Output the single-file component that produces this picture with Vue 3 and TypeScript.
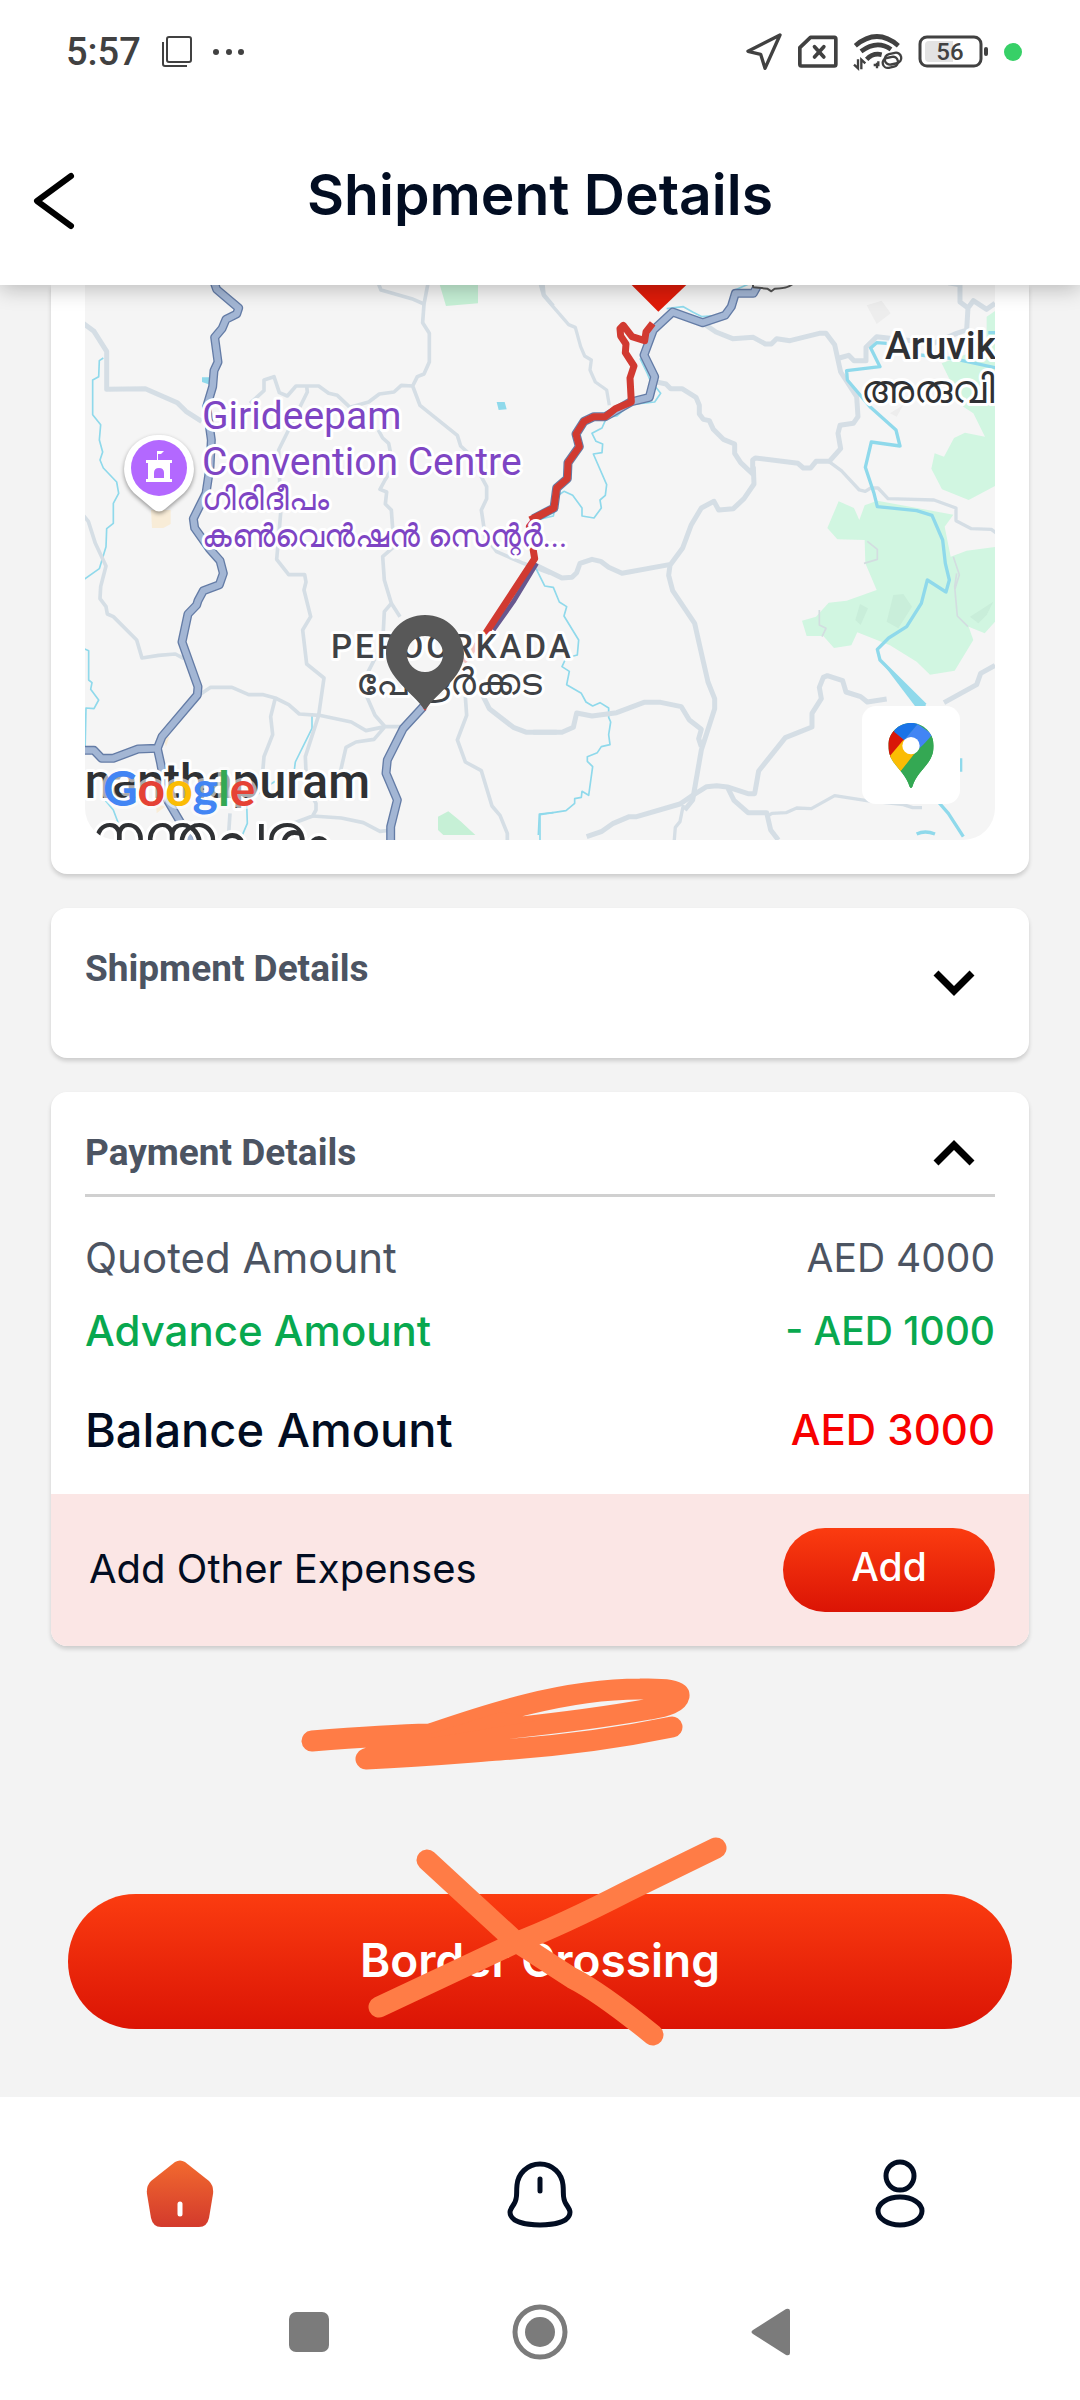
<script setup lang="ts">
interface AmountRow {
  label: string
  value: string
  tone: 'quoted' | 'advance' | 'balance'
}

const amounts: AmountRow[] = [
  { label: 'Quoted Amount', value: 'AED 4000', tone: 'quoted' },
  { label: 'Advance Amount', value: '- AED 1000', tone: 'advance' },
  { label: 'Balance Amount', value: 'AED 3000', tone: 'balance' },
]

// Map geometry is drawn in thirds of a pixel, grouped by map tile.
const highwaysWest: string[] = [
  'M490 0L500 28L566 84L560 102L528 118L516 146L494 172L504 246L492 272L488 320L470 380L484 480L480 560L468 640L430 716L434 744L478 806L510 842L520 880L508 914L460 932L444 962L440 975L414 1002L396 1086L444 1220L442 1245L336 1370L322 1405L264 1407L190 1435H155L132 1411H100',
  'M322 1405L332 1450L352 1560L405 1650L430 1700',
  'M1120 1280L1060 1345L1012 1440L1008 1480L1042 1560L1022 1640V1700',
]
const highwaysEast: string[] = [
  'M668 -10L640 40H586L574 80L555 106L488 128L398 96L340 150L312 225L344 290L328 352L272 366L196 410H162L132 424L108 462L118 500L84 548L82 596L50 624L42 684L-20 716',
]
const routeEast =
  'M338 130L318 156L314 182L276 170L250 136L240 146L242 168L258 192L256 218L282 258L270 294L274 366L226 386L196 410H162L132 424L108 462L118 500L84 548L82 596L50 624L42 684L-30 720'
const routeWest = 'M1500 690L1460 712L1438 740L1454 836L1306 1062'

const minorWest: string[] = [
  'M985 10L993 30L1085 56L1122 72L1134 10M1122 72L1118 128L1138 160V246L1122 282L1102 290L1088 318L1054 316L1032 336L988 342L956 366L900 382L862 346L836 340L806 318H738L712 348L688 338L672 290L642 300V332L600 370M770 318L772 336L686 510L692 700L680 838L716 884H764L768 906L762 930L782 1010L758 1050L770 1152L822 1194L806 1306L766 1430L770 1520L798 1570V1590L788 1608L690 1645M1088 318L1110 376L1222 466L1232 498L1256 520L1310 620V656L1294 690L1306 770L1340 815L1420 850L1500 880',
  'M985 450L998 474L1016 490L1030 560L1005 600L990 628L1010 636L1006 672L1024 690L1032 800L998 830L1003 900L1024 970L1050 1010M1024 970L1003 995L998 1090L952 1180L946 1240L975 1306L1005 1340',
  'M100 706L115 724L136 790L168 858L152 920L150 956L168 980L172 1002L190 1010L260 1080L276 1134L326 1126L376 1122L402 1136',
  'M452 1242L482 1222H546L596 1244H640L676 1254L716 1274L748 1302L808 1306L904 1326L948 1352L1005 1340H1050M676 1254L662 1310L668 1364L642 1430L636 1500M1005 1340L972 1378L918 1386L888 1402L870 1480M536 1660L540 1600',
  'M788 1608L874 1614L940 1628L990 1654L1025 1650M1246 1250L1250 1306L1222 1380L1246 1446L1294 1472L1326 1578L1350 1606L1372 1660V1700M1478 5L1482 44L1510 78',
]
const majorWest: string[] = [
  'M100 130L132 154L170 214V328L286 326L382 368L408 394L455 424',
  'M1295 1240L1318 1286L1390 1342L1430 1357H1520',
]
const minorEast: string[] = [
  'M0 10L10 46L86 134L106 142L122 200L134 228L154 240L150 270L166 306L200 330L208 376',
  'M866 544L904 572L958 630L976 634L992 624H1014L1044 656L1182 660L1248 684V722L1294 746L1354 748L1370 760',
  'M680 1610L696 1600L738 1598L770 1584L814 1586L884 1547L980 1562L1090 1574L1118 1583H1146M430 1575L420 1625L406 1642L402 1690',
]
const majorEast: string[] = [
  'M490 130L528 156L578 176L640 172L676 192H694L710 176L750 182L838 160H858L884 194L902 276L950 350L954 410L940 430L900 436L894 460L902 506L868 544H828L812 564H790L774 550L646 534L638 540V582L602 548L584 520V492L550 478L520 448L508 422L490 418L478 402V376L468 352L426 326H392L378 312L345 305M640 560L642 612L612 656L580 686L536 690L522 664L484 684L454 734L428 804L390 856L386 886L398 932L464 1030L482 1110L504 1206L524 1256V1286L484 1410L458 1560L434 1590',
  'M-20 852L66 894L96 892L110 878L120 850L156 838L182 844L206 862L246 880L388 854',
  'M898 234L926 226L942 242L978 242V202L1010 170L1180 190L1250 160L1280 150L1284 84L1260 66V14L1225 8M1284 84L1300 62L1340 88L1365 70',
  'M-20 1357H66L100 1342L110 1299L156 1308L230 1298L312 1267H362L424 1280L448 1320L484 1348L476 1376L484 1400',
  'M140 1670L186 1654L220 1630L268 1610H290L420 1572L458 1546L500 1520L530 1517L562 1521L624 1541H644L656 1473L736 1373L816 1341V1300L844 1256L838 1222L850 1192L862 1187L908 1202L918 1236L962 1250L982 1266L1040 1257M562 1521L582 1561L624 1598H680L692 1650L715 1680M1212 1268L1310 1214L1322 1180L1365 1156',
]
const streamsWest: string[] = [
  'M160 234L148 242L146 290L128 300V404L152 434L148 480L158 516L150 540L160 564L200 606L206 640L190 670V730L170 746L168 800L148 866L100 900',
  'M100 1105L116 1112V1200L126 1208L122 1228L146 1260L132 1286L108 1284L105 1420M165 1560L190 1590L205 1630M786 1300V1345L736 1446L733 1470L656 1516L590 1570L592 1630L575 1670M1465 1665L1468 1602L1510 1598',
]
const streamsEast: string[] = [
  'M642 5L585 30M550 105L486 110L458 96L430 80L380 86M300 235L322 280L330 300L362 340L344 366L270 374L230 408L200 412L186 444L156 460L168 484L188 492L186 518L160 522L200 614L196 646L180 660L184 684L162 714L126 708V684L98 646L72 634L52 648L40 708L-20 722',
  'M-20 840L-10 870L14 918L40 922L58 966L80 980L72 1008L116 1080L112 1125L78 1134L66 1160L88 1174L80 1214L124 1240L138 1266L158 1278L180 1268L206 1284V1312L212 1326L206 1364L210 1394L184 1400L172 1418L142 1430V1444L158 1460L146 1546L126 1534L124 1552L104 1556V1570L78 1592L0 1604V1690',
]
const rivers: string[] = [
  'M1040 190L1010 188L992 204L1020 260L920 272L922 300L990 380L1068 450L1080 498L994 486L976 562L1002 640L1012 680L1130 692L1176 706L1208 780L1216 850L1228 900L1218 936L1162 900L1144 970L1100 1040L1046 1074L1012 1108L1020 1140L1156 1275M1190 1560L1225 1600L1270 1670M1130 1662Q1155 1650 1185 1662M1262 1435V1475M1140 225L1240 236L1370 264M1345 158H1370',
]
const parks: string[] = [
  'M1370 90L1340 110V200L1205 250L1225 290L1270 380L1300 400L1335 470L1275 458L1242 474L1212 530L1184 520L1174 566L1206 628L1286 660L1370 615Z',
  'M1012 662L1240 704L1214 740L1232 830L1280 812L1370 800V1020L1334 1060L1286 1040L1300 1080L1244 1172L1170 1184L1130 1145L1050 1096L952 1057L934 1096L882 1104L850 1068H800L786 1022L828 1010L866 968L920 962L1010 930L976 850L974 780L892 778L862 744L896 664L942 684L958 720L974 676Z',
]
</script>

<template>
  <div class="screen">
    <div class="status">
      <div class="status-side">
        <span class="clock">5:57</span>
        <svg width="32" height="32" viewBox="0 0 32 32" fill="none" stroke="#414141" stroke-width="2">
          <rect x="6" y="1" width="24" height="25" rx="2" />
          <path d="M2 6V28Q2 30 4 30H26" />
        </svg>
        <svg width="32" height="32" viewBox="0 0 32 32" fill="#414141">
          <circle cx="3" cy="16" r="3" /><circle cx="16" cy="16" r="3" /><circle cx="28" cy="16" r="3" />
        </svg>
      </div>
      <div class="status-side status-right">
        <svg width="36" height="38" viewBox="599 102 108 114" fill="none" stroke="#414141" stroke-width="10" stroke-linejoin="round">
          <path d="M701 108L605 157L643 166L656 208Z" />
        </svg>
        <svg width="41" height="34" viewBox="744 109 122 102" fill="none" stroke="#414141" stroke-width="11" stroke-linejoin="round">
          <path d="M784 116H856Q860 116 860 121V197Q860 202 855 202H757Q752 202 752 197V147Z" />
          <path d="M796 144L824 175M824 144L796 175" stroke-linecap="round" />
        </svg>
        <svg width="50" height="38" viewBox="908 101 150 114" fill="none" stroke="#414141" stroke-width="14">
          <path d="M915 139Q980 84 1044 139M932 156Q980 120 1022 150M949 180Q968 160 994 166" />
          <g stroke-width="7">
            <path d="M923 180V207L911 196M933 210V181L945 192M970 197H984V186M980 190V207" />
            <rect x="1003" y="162" width="50" height="32" rx="16" transform="rotate(-12 1028 178)" />
            <rect x="997" y="174" width="46" height="30" rx="15" transform="rotate(-12 1020 189)" />
          </g>
        </svg>
        <svg width="71" height="34" viewBox="0 0 71 34">
          <rect x="2" y="2" width="61" height="29" rx="7" fill="none" stroke="#414141" stroke-width="3" />
          <path d="M11 6H35V27H11Q7 27 7 23V10Q7 6 11 6Z" fill="#e3e3e3" />
          <rect x="66" y="12" width="4" height="9" rx="2" fill="#414141" />
          <text x="32" y="25" text-anchor="middle" class="battery-text">56</text>
        </svg>
        <span class="live-dot"></span>
      </div>
    </div>

    <header class="header">
      <button class="back" type="button" aria-label="Back">
        <svg width="43" height="58" viewBox="0 0 43 58" fill="none" stroke="#000" stroke-width="6" stroke-linecap="round" stroke-linejoin="round">
          <path d="M38 4L4 29L38 54" />
        </svg>
      </button>
      <h1>Shipment Details</h1>
    </header>

    <main class="content">
      <section class="card map-card">
        <div class="map">
          <svg class="map-art" viewBox="0 0 910 555" preserveAspectRatio="xMidYMid slice" fill="none" stroke-linejoin="round">
            <g transform="scale(0.33333)">
              <g transform="translate(1365 -15)">
                <path v-for="d in parks" :key="d" :d="d" fill="#d1f6e1" />
                <path d="M1060 945L1090 942L1116 980L1075 1045L1040 1025ZM1290 1010L1360 965L1340 1005L1315 1030ZM960 972L984 985L962 1035L946 1020Z" fill="#c9eeda" />
                <path d="M980 76L1025 62L1052 100L1010 132ZM1050 400L1090 375L1070 410Z" fill="#ededed" />
                <path d="M982 784L1012 808V838L972 850M838 990V1035L858 1045L846 1070M1250 880L1244 920L1252 1008L1284 1040M1240 830L1258 884L1244 930" stroke="#d3dde0" stroke-width="5" />
              </g>
              <g transform="translate(-105 -15)">
                <path d="M1165 0H1284V70L1188 78ZM1164 1610L1195 1594L1230 1622L1276 1665H1180L1164 1650Z" fill="#c6f0d6" />
                <path d="M456 292H480V314L456 306ZM1340 366H1364L1370 388L1346 390Z" fill="#8fd9eb" />
                <path d="M303 690H362V732L340 744H306ZM340 1375L358 1370L348 1400ZM318 1570L345 1580L320 1600Z" fill="#f8ecd7" />
                <g stroke="#8fd9eb" stroke-width="5"><path v-for="d in streamsWest" :key="d" :d="d" /></g>
                <g stroke="#d5dee5" stroke-width="11"><path v-for="d in minorWest" :key="d" :d="d" /></g>
                <g stroke="#d5dee5" stroke-width="15"><path v-for="d in majorWest" :key="d" :d="d" /></g>
                <g stroke="#647ca6" stroke-width="27"><path v-for="d in highwaysWest" :key="d" :d="d" /></g>
                <g stroke="#a3b6d4" stroke-width="19"><path v-for="d in highwaysWest" :key="d" :d="d" /></g>
              </g>
              <g transform="translate(1365 -15)">
                <g stroke="#8fd9eb" stroke-width="5"><path v-for="d in streamsEast" :key="d" :d="d" /></g>
                <g stroke="#d5dee5" stroke-width="10"><path v-for="d in minorEast" :key="d" :d="d" /></g>
                <g stroke="#d5dee5" stroke-width="15"><path v-for="d in majorEast" :key="d" :d="d" /></g>
                <g stroke="#8fd9eb" stroke-width="10"><path v-for="d in rivers" :key="d" :d="d" /></g>
                <path d="M1020 1140L1130 1285H1165Z" fill="#8fd9eb" />
                <g stroke="#647ca6" stroke-width="27"><path v-for="d in highwaysEast" :key="d" :d="d" /></g>
                <g stroke="#a3b6d4" stroke-width="19"><path v-for="d in highwaysEast" :key="d" :d="d" /></g>
                <path d="M636 0L640 22L682 26L694 34L704 26Q745 26 760 10" stroke="#555" stroke-width="6" fill="#f5f5f5" />
                <path :d="routeEast" stroke="#d13a31" stroke-width="21" />
              </g>
              <g transform="translate(-105 -15)">
                <path d="M1460 850L1390 965L1330 1050" stroke="#67588f" stroke-width="14" />
                <path :d="routeWest" stroke="#d13a31" stroke-width="21" />
                <path d="M1306 1062L1240 1145" stroke="#f3c6c3" stroke-width="18" />
              </g>
              <path d="M1640 0H1804L1720 80Z" fill="#df1b09" />
            </g>

            <g class="place">
              <text x="117" y="144">Girideepam</text>
              <text x="117" y="190">Convention Centre</text>
              <text x="117" y="225" class="place-local">ഗിരിദീപം</text>
              <text x="117" y="262" class="place-local">കൺവെൻഷൻ സെന്റർ...</text>
            </g>
            <g class="town">
              <text x="800" y="74" class="town-name">Aruvik</text>
              <text x="776" y="118" class="town-local">അരുവി</text>
              <text x="285" y="513" text-anchor="end" class="city">nanthapuram</text>
              <text x="5" y="570" class="city-local">നന്തപുരം</text>
              <text x="246" y="373" class="district">PEROORKADA</text>
              <text x="271" y="410" class="district-local">പേരൂർക്കട</text>
            </g>

            <g>
              <path class="pin-shade" d="M74 150A34 34 0 0 1 99 208L80 224Q74 229 68 224L49 208A34 34 0 0 1 74 150Z" fill="#fff" />
              <circle cx="74" cy="183" r="28" fill="#b368ff" />
              <path d="M72 175V166H79L76 169H73V175ZM61 175H87V178H85V194H87V197H61V194H63V178H61Z" fill="#fff" />
              <path d="M69 193V188Q69 183 74 183Q79 183 79 188V193Z" fill="#b368ff" />
            </g>
            <path d="M340 426L332 413H348Z" fill="#d13a31" />
            <path d="M340 330C318 330 301 347 301 369C301 392 329 409 339 424H341C351 409 379 392 379 369C379 347 362 330 340 330ZM340 351A18 18 0 1 1 340 387A18 18 0 1 1 340 351Z" fill="#585858" fill-rule="evenodd" />
            <text x="18" y="521" class="google"><tspan fill="#4285f4">G</tspan><tspan fill="#e54235">o</tspan><tspan fill="#fbbc05">o</tspan><tspan fill="#4285f4">g</tspan><tspan fill="#34a853">l</tspan><tspan fill="#e54235">e</tspan></text>
          </svg>
          <button class="open-maps" type="button" aria-label="Open in Maps">
            <svg width="46" height="65" viewBox="1047 427 136 195">
              <defs>
                <clipPath id="pin-shape">
                  <path d="M1115 427C1153 427 1183 457 1183 495C1183 552 1135 565 1119 618Q1115 625 1111 618C1095 565 1047 552 1047 495C1047 457 1077 427 1115 427Z" />
                </clipPath>
              </defs>
              <g clip-path="url(#pin-shape)">
                <rect x="1040" y="420" width="150" height="210" fill="#34a853" />
                <path d="M1040 455L1065 450L1115 495L1050 535Z" fill="#d91608" />
                <path d="M1064 453L1080 420H1144L1095 479Z" fill="#1a73e8" />
                <path d="M1135 430L1183 464L1132 510L1094 479Z" fill="#4285f4" />
                <path d="M1092 478L1140 500L1070 590L1040 540Z" fill="#fbbc04" />
                <path d="M1183 457L1060 600L1120 640L1200 560Z" fill="#34a853" />
              </g>
              <circle cx="1115" cy="495" r="26" fill="#fff" />
            </svg>
          </button>
        </div>
      </section>

      <section class="card shipment-card">
        <button class="toggle" type="button" aria-expanded="false">
          <span>Shipment Details</span>
          <svg class="chevron-low" width="42" height="26" viewBox="0 0 42 26" fill="none" stroke="#000" stroke-width="7">
            <path d="M3 3L21 21L39 3" />
          </svg>
        </button>
      </section>

      <section class="card payment-card">
        <button class="toggle payment-toggle" type="button" aria-expanded="true">
          <span>Payment Details</span>
          <svg width="42" height="26" viewBox="0 0 42 26" fill="none" stroke="#000" stroke-width="7">
            <path d="M3 23L21 5L39 23" />
          </svg>
        </button>
        <dl class="amounts">
          <div v-for="row in amounts" :key="row.label" class="amount" :class="row.tone">
            <dt>{{ row.label }}</dt>
            <dd>{{ row.value }}</dd>
          </div>
        </dl>
        <div class="expenses">
          <span>Add Other Expenses</span>
          <button class="add" type="button">Add</button>
        </div>
      </section>

      <div class="actions">
        <button class="crossing" type="button">Border Crossing</button>
        <svg class="marks" width="480" height="451" viewBox="300 1647 480 451" fill="none" stroke="#ff7c46" stroke-width="21" stroke-linecap="round" stroke-linejoin="round">
          <path d="M312 1742C350 1739 390 1736 430 1735C480 1718 560 1690 640 1690Q680 1689 679 1697Q677 1706 650 1710C600 1719 520 1729 430 1737L366 1760C430 1757 470 1753 500 1751Q590 1745 672 1728" />
          <path d="M431 1735L500 1713L518 1716L535 1722L431 1739Z" fill="#ff7c46" stroke="none" />
          <path d="M716 1849L628 1892Q560 1927 515 1944L379 2008M427 1861L515 1942L572 1979Q600 1993 653 2036" />
        </svg>
      </div>
    </main>

    <nav class="tabs" aria-label="Main">
      <a href="#home" aria-label="Home">
        <svg width="68" height="68" viewBox="0 0 68 68">
          <defs>
            <linearGradient id="home-fill" x1="0" y1="0" x2="0" y2="1">
              <stop offset="0" stop-color="#f26a2f" /><stop offset="1" stop-color="#d33a2c" />
            </linearGradient>
          </defs>
          <path d="M29 2Q34 -1 39 2L63 21Q68 26 67 34L63 58Q61 67 53 67H15Q7 67 5 58L1 34Q0 26 5 21Z" fill="url(#home-fill)" />
          <path d="M34 44V54" stroke="#fff" stroke-width="5" stroke-linecap="round" />
        </svg>
      </a>
      <a href="#alerts" aria-label="Notifications">
        <svg width="68" height="68" viewBox="0 0 68 68" fill="none" stroke="#020d22" stroke-width="5">
          <path d="M34 4C47 4 56 14 57 25C58 34 56 38 60 44C64 50 65 52 63 56C60 62 48 65 34 65S8 62 5 56C3 52 4 50 8 44C12 38 10 34 11 25C12 14 21 4 34 4Z" />
          <path d="M34 19V31" stroke-linecap="round" />
        </svg>
      </a>
      <a href="#profile" aria-label="Profile">
        <svg width="68" height="70" viewBox="0 0 68 70" fill="none" stroke="#020d22" stroke-width="5">
          <circle cx="34" cy="17" r="14" />
          <ellipse cx="34" cy="52" rx="22" ry="14" />
        </svg>
      </a>
    </nav>

    <div class="system">
      <button type="button" aria-label="Recent apps">
        <svg width="42" height="42" viewBox="0 0 42 42"><rect x="1" y="1" width="40" height="40" rx="7" fill="#7b7b7b" /></svg>
      </button>
      <button type="button" aria-label="Home screen">
        <svg width="56" height="56" viewBox="0 0 56 56">
          <circle cx="28" cy="28" r="25" fill="none" stroke="#7b7b7b" stroke-width="5" /><circle cx="28" cy="28" r="15" fill="#7b7b7b" />
        </svg>
      </button>
      <button type="button" aria-label="Go back">
        <svg width="42" height="48" viewBox="0 0 42 48"><path d="M3 22L36 1Q40 0 40 3V45Q40 48 36 47L3 26Q0 24 3 22Z" fill="#7b7b7b" /></svg>
      </button>
    </div>
  </div>
</template>

<style>
body {
  background: #fff;
}
</style>

<style scoped>
* {
  box-sizing: border-box;
}
.screen {
  font-family: Inter, "Liberation Sans", sans-serif;
  color: #020d22;
  background: #fff;
}
svg {
  display: block;
}
button {
  border: 0;
  margin: 0;
  padding: 0;
  background: none;
  font: inherit;
  color: inherit;
}
.status {
  position: relative;
  z-index: 2;
  display: flex;
  align-items: center;
  justify-content: space-between;
  height: 104px;
  padding: 0 58px 0 66px;
  background: #fff;
}
.status-side {
  display: flex;
  align-items: center;
  gap: 20px;
}
.status-right {
  gap: 15px;
}
.clock {
  font: 500 38px/48px Roboto, sans-serif;
  color: #414141;
}
.battery-text {
  font: 500 24px Roboto, sans-serif;
  fill: #414141;
}
.live-dot {
  width: 18px;
  height: 18px;
  border-radius: 50%;
  background: #37d067;
}
.header {
  position: relative;
  z-index: 1;
  display: grid;
  grid-template-columns: 120px 1fr 120px;
  align-items: center;
  height: 181px;
  background: #fff;
  box-shadow: 0 4px 20px rgb(0 0 0 / 24%);
}
.back {
  padding: 12px 0 0 33px;
}
h1 {
  margin: 0;
  text-align: center;
  font-size: 57px;
  line-height: 72px;
  font-weight: 600;
}
.content {
  display: flex;
  flex-direction: column;
  gap: 34px;
  padding: 0 51px;
  background: #f3f3f3;
}
.card {
  background: #fff;
  border-radius: 16px;
  box-shadow: 0 3px 4px rgb(0 0 0 / 16%);
}
.map-card {
  padding: 0 34px 34px;
  border-radius: 0 0 16px 16px;
}
.map {
  position: relative;
  height: 555px;
  overflow: hidden;
  background: #f5f5f5;
  border-radius: 0 0 32px 32px;
}
.map-art {
  width: 100%;
  height: 100%;
}
.map-art text {
  paint-order: stroke;
  stroke: #fff;
  stroke-width: 6px;
  stroke-linejoin: round;
  font-family: Roboto, sans-serif;
}
.place {
  fill: #7e45c4;
  font-size: 39px;
}
.place .place-local {
  font-size: 31px;
}
.town {
  fill: #2f3134;
  font-weight: 500;
}
.town-name {
  font-size: 39px;
}
.town-local {
  font-size: 39px;
}
.city {
  font-size: 48px;
}
.city-local {
  font-size: 57px;
}
.district {
  font-size: 33px;
  letter-spacing: 3px;
  fill: #3f4246;
}
.district-local {
  font-size: 37px;
  fill: #3f4246;
}
.map-art .google {
  font: 700 48px Lato, sans-serif;
  stroke: rgb(255 255 255 / 60%);
}
.pin-shade {
  filter: drop-shadow(0 2px 2px rgb(0 0 0 / 40%));
}
.open-maps {
  position: absolute;
  right: 35px;
  bottom: 36px;
  display: grid;
  place-items: center;
  width: 98px;
  height: 98px;
  border-radius: 14px;
  background: #fff;
}
.toggle {
  display: flex;
  align-items: center;
  justify-content: space-between;
  width: 100%;
  padding-right: 20px;
  font: 700 37px/50px Roboto, sans-serif;
  color: #4c5462;
}
.chevron-low {
  margin-top: 28px;
}
.shipment-card {
  height: 150px;
  padding: 34px;
}
.payment-card {
  display: flex;
  flex-direction: column;
  overflow: hidden;
}
.payment-toggle {
  width: auto;
  margin: 0 34px;
  padding: 36px 20px 16px 0;
  border-bottom: 3px solid #d0d0d0;
}
.amounts {
  margin: 0;
  padding: 24px 34px 28px;
}
.amount {
  display: flex;
  justify-content: space-between;
  font-size: 42px;
  line-height: 73px;
}
.amount dd {
  margin: 0;
  font-size: 39px;
}
.quoted {
  color: #4c5462;
}
.advance {
  color: #08a84f;
  font-weight: 500;
}
.balance {
  margin-top: 26px;
  font-size: 47px;
  font-weight: 500;
}
.balance dd {
  color: #f70000;
  font-size: 42px;
}
.expenses {
  display: flex;
  align-items: center;
  justify-content: space-between;
  height: 152px;
  padding: 0 34px 0 38px;
  background: #fbe6e5;
  font-size: 40px;
}
.expenses span {
  padding-bottom: 3px;
}
.add {
  width: 212px;
  height: 84px;
  padding-bottom: 8px;
  border-radius: 42px;
  background: linear-gradient(#fb3c10, #db1405);
  color: #fff;
  font-size: 39px;
  font-weight: 500;
}
.actions {
  position: relative;
  margin-top: -34px;
  padding: 248px 17px 68px;
}
.crossing {
  width: 100%;
  height: 135px;
  padding-bottom: 3px;
  border-radius: 68px;
  background: linear-gradient(#fb3c10, #db1405);
  color: #fff;
  font-size: 46px;
  font-weight: 600;
}
.marks {
  position: absolute;
  top: 0;
  left: 50%;
  margin-left: -240px;
  pointer-events: none;
}
.tabs {
  display: grid;
  grid-template-columns: repeat(3, 1fr);
  place-items: center;
  height: 194px;
}
.system {
  display: grid;
  grid-template-columns: repeat(3, 231px);
  justify-content: center;
  place-items: center;
  height: 82px;
}
</style>
